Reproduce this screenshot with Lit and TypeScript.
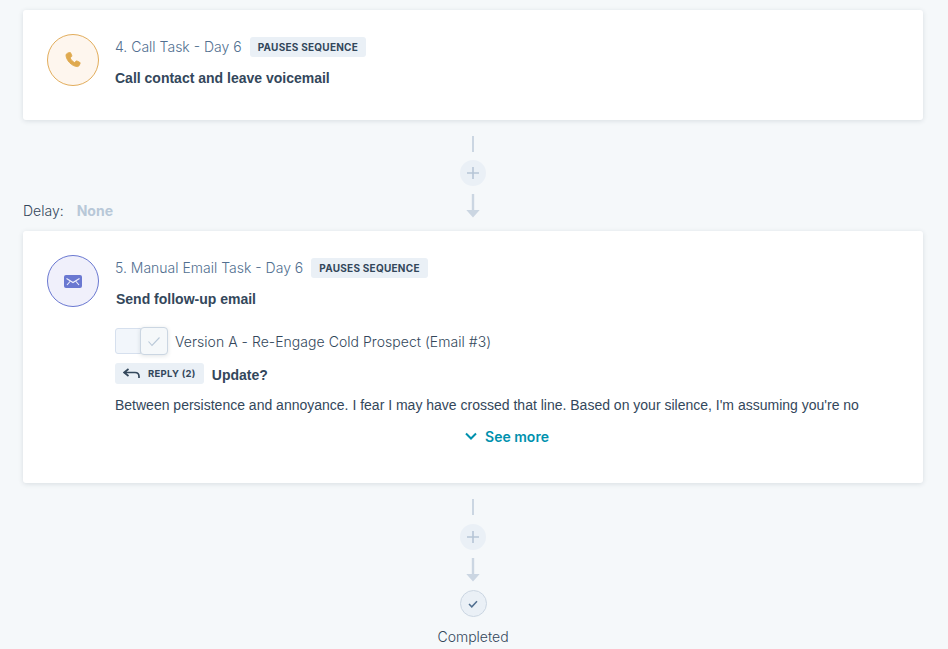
import { LitElement, html, css, svg } from "lit";
import { customElement } from "lit/decorators.js";

const arrow = svg`<svg width="14" height="24" viewBox="0 0 14 24"><path d="M5.800 0h2.400v16h5.500L7 23.500.3 16h5.500z" fill="#cbd6e2"/></svg>`;

@customElement("app-root")
export class AppRoot extends LitElement {
  static styles = css`
    :host { display: block; height: 649px; overflow: hidden; background: #f5f8fa; color: #33475b; font-family: "Liberation Sans", Arial, sans-serif; font-size: 14px; }
    .page { padding: 10px 25px 0 23px; display: flex; flex-direction: column; }
    .card { background: #fff; border-radius: 3px; box-shadow: 0 1px 5px rgba(45, 62, 80, .14); padding: 24px 24px 0; display: flex; gap: 16px; }
    .c1 { height: 110px; box-sizing: border-box; }
    .c2 { height: 252px; box-sizing: border-box; }
    .avatar { width: 52px; height: 52px; flex: none; box-sizing: border-box; border-radius: 50%; display: flex; align-items: center; justify-content: center; }
    .orange { background: #fef6ee; border: 1px solid #e2ad5c; }
    .blue { background: #f0f0fb; border: 1px solid #6a78d1; }
    .main { flex: 1; min-width: 0; display: flex; flex-direction: column; }
    .head { display: flex; align-items: center; gap: 8px; height: 26px; margin-top: -1px; }
    .title { font-family: "Inter", sans-serif; font-weight: 300; font-size: 14px; color: #516f90; }
    .tag { background: #eaf0f6; border-radius: 3px; font-family: "Inter", sans-serif; font-weight: 700; font-size: 10px; letter-spacing: .25px; height: 20px; line-height: 20px; padding: 0 8px; margin-top: 1px; white-space: nowrap; }
    .desc { font-weight: 700; font-size: 14px; line-height: 20px; margin-top: 9px; }
    .c2 .desc { margin-left: 1px; }
    .version { display: flex; align-items: center; margin-top: 18px; height: 28px; }
    .toggle { display: flex; align-items: center; width: 53px; }
    .off { width: 26px; height: 26px; box-sizing: border-box; background: #f2f6fb; border: 1px solid #d6e0ee; border-radius: 3px 0 0 3px; }
    .on { width: 28px; height: 28px; box-sizing: border-box; margin-left: -1px; background: #f5f8fa; border: 1px solid #cbd6e2; border-radius: 4px; box-shadow: 0 1px 4px rgba(45,62,80,.14); display: flex; align-items: center; justify-content: center; }
    .vtext { font-family: "Inter", sans-serif; font-weight: 300; font-size: 14px; letter-spacing: .04px; color: #33475b; margin-left: 7px; }
    .reply { display: flex; align-items: center; gap: 8px; margin-top: 8px; height: 21px; }
    .rtag { display: flex; align-items: center; gap: 8px; background: #eaf0f6; border-radius: 3px; height: 21px; padding: 0 8px; box-sizing: border-box; font-family: "Inter", sans-serif; font-weight: 700; font-size: 9.500px; letter-spacing: .3px; }
    .subject { font-weight: 700; font-size: 14px; padding-top: 2px; }
    .body { font-size: 14px; line-height: 20px; margin-top: 11px; white-space: nowrap; overflow: hidden; }
    .more { display: flex; justify-content: center; align-items: center; gap: 8px; margin-top: 11px; height: 20px; color: #0091ae; font-family: "Inter", sans-serif; font-weight: 600; font-size: 14px; }
    .conn { display: grid; grid-template-columns: 1fr auto 1fr; }
    .col { width: 26px; display: flex; flex-direction: column; align-items: center; }
    .line { width: 2px; height: 16px; margin-top: 16px; background: #cbd6e2; }
    .plus { width: 26px; height: 26px; margin-top: 8px; border-radius: 50%; background: #eaf0f6; display: flex; align-items: center; justify-content: center; }
    .arrow { margin-top: 8px; height: 24px; margin-bottom: 13px; }
    .delay { align-self: end; margin-bottom: 12px; display: flex; gap: 13px; line-height: 16px; font-family: "Inter", sans-serif; font-weight: 300; font-size: 14px; color: #33475b; }
    .delay b { color: #b8c8d8; font-weight: 700; }
    .c2conn .plus { margin-top: 9px; }
    .c2conn .arrow { margin-bottom: 0; }
    .end { display: flex; flex-direction: column; align-items: center; }
    .done { width: 27px; height: 27px; margin-top: 8px; box-sizing: border-box; border-radius: 50%; background: #eaf0f6; border: 1px solid #cbd6e2; display: flex; align-items: center; justify-content: center; }
    .label { margin-top: 11px; font-family: "Inter", sans-serif; font-weight: 300; font-size: 14px; color: #33475b; line-height: 18px; }
  `;

  private connector(delay: boolean) {
    return html`<div class="conn ${delay ? "" : "c2conn"}">
      <div class="delay">${delay ? html`<span>Delay:</span><b>None</b>` : ""}</div>
      <div class="col">
        <div class="line"></div>
        <div class="plus"><svg width="12" height="12" viewBox="0 0 12 12"><path d="M5.200 0h1.600v5.200H12v1.600H6.800V12H5.200V6.800H0V5.200h5.200z" fill="#b6c5d6"/></svg></div>
        <div class="arrow">${arrow}</div>
      </div>
      <div></div>
    </div>`;
  }

  render() {
    return html`<div class="page">
      <section class="card c1">
        <div class="avatar orange">
          <svg width="16" height="16" viewBox="0 0 16 16"><path d="M2.200 1.400 4.400.4c.5-.2 1 0 1.200.4l1.200 2.700c.2.4.1.8-.2 1.100L5.200 5.800c.7 1.900 2.300 3.700 4.400 4.800l1.300-1.400c.3-.3.8-.4 1.200-.2l2.600 1.300c.4.2.6.700.4 1.200l-1 2.100c-.3.600-.9 1-1.600 1C6.500 14.400 1 8 1 3.100c0-.7.500-1.400 1.200-1.700z" fill="#dfa94f" stroke="#dfa94f" stroke-width=".9" stroke-linejoin="round"/></svg>
        </div>
        <div class="main">
          <div class="head"><span class="title">4. Call Task - Day 6</span><span class="tag">PAUSES SEQUENCE</span></div>
          <div class="desc">Call contact and leave voicemail</div>
        </div>
      </section>
      ${this.connector(true)}
      <section class="card c2">
        <div class="avatar blue">
          <svg width="18" height="13" viewBox="0 0 18 13"><rect width="18" height="13" rx="2" fill="#6a78d1"/><path d="M2.500 3.500 9 7.500 15.500 3.500M3 10 6 6.500M15 10 12 6.500" fill="none" stroke="#f0f0fb" stroke-width="1.100"/></svg>
        </div>
        <div class="main">
          <div class="head"><span class="title">5. Manual Email Task - Day 6</span><span class="tag">PAUSES SEQUENCE</span></div>
          <div class="desc">Send follow-up email</div>
          <div class="version">
            <div class="toggle"><div class="off"></div><div class="on"><svg width="14" height="11" viewBox="0 0 14 11"><path d="M1.500 5.500 5 9.500 12.500 1.500" fill="none" stroke="#b9c8d8" stroke-width="1.100"/></svg></div></div>
            <span class="vtext">Version A - Re-Engage Cold Prospect (Email #3)</span>
          </div>
          <div class="reply">
            <span class="rtag"><svg width="17" height="11" viewBox="0 0 17 11"><path d="M5.500 1 1 4.500 5.500 8M1 4.500h11c2.500 0 4 1.500 4 4v1.500" fill="none" stroke="#33475b" stroke-width="1.700"/></svg>REPLY (2)</span>
            <span class="subject">Update?</span>
          </div>
          <div class="body">Between persistence and annoyance. I fear I may have crossed that line. Based on your silence, I'm assuming you're no</div>
          <div class="more"><svg width="12" height="8" viewBox="0 0 12 8"><path d="M1 1.500 6 6.500 11 1.500" fill="none" stroke="#0091ae" stroke-width="2"/></svg>See more</div>
        </div>
      </section>
      ${this.connector(false)}
      <div class="end">
        <div class="done"><svg width="10" height="8" viewBox="0 0 10 8"><path d="M1 4 3.800 6.800 9 1.200" fill="none" stroke="#516f90" stroke-width="1.500"/></svg></div>
        <div class="label">Completed</div>
      </div>
    </div>`;
  }
}
